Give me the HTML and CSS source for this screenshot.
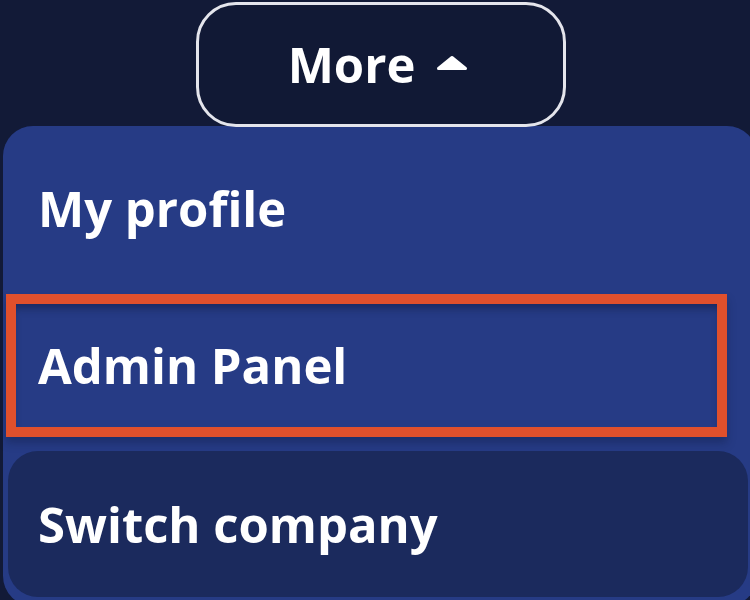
FILE: index.html
```html
<!DOCTYPE html>
<html lang="en">
<head>
<meta charset="utf-8">
<title>More menu</title>
<link rel="stylesheet" href="styles.css">
</head>
<body>
<div class="page">
  <button class="more-btn" type="button">
    <span class="more-label">More</span>
    <svg class="caret" width="32" height="16" viewBox="0 0 32 16" aria-hidden="true">
      <polygon points="16,2.5 29.5,13.5 2.5,13.5" fill="#ffffff" stroke="#ffffff" stroke-width="3" stroke-linejoin="round"/>
    </svg>
  </button>
  <div class="menu">
    <div class="item item-profile">My profile</div>
    <div class="item item-admin">Admin Panel</div>
    <div class="item item-switch">Switch company</div>
  </div>
</div>
</body>
</html>
```
FILE: styles.css
```css
html, body {
  margin: 0;
  padding: 0;
  background: #121a37;
  width: 750px;
  height: 600px;
  overflow: hidden;
}

.page {
  display: flex;
  flex-direction: column;
  align-items: flex-start;
  padding-top: 2px;
  font-family: "Open Sans", "Noto Sans", sans-serif;
  color: #ffffff;
}

.more-btn {
  margin-left: 196px;
  width: 370px;
  height: 125px;
  box-sizing: border-box;
  border: 3px solid #e4e5ec;
  border-radius: 40px;
  background: #111935;
  color: #ffffff;
  display: flex;
  align-items: center;
  justify-content: center;
  gap: 21px;
  font-family: inherit;
  font-size: 49px;
  font-weight: 700;
  padding: 0 6px 0 0;
  position: relative;
  z-index: 2;
}

.more-label {
  line-height: 1;
}

.caret {
  display: block;
  margin-top: -3px;
}

.menu {
  margin-left: 3px;
  margin-top: -1px;
  width: 754px;
  height: 480px;
  box-sizing: border-box;
  background: #263b85;
  border-radius: 30px;
  display: flex;
  flex-direction: column;
  align-items: flex-start;
}

.item {
  display: flex;
  align-items: center;
  box-sizing: border-box;
  font-size: 49px;
  font-weight: 700;
  line-height: 1;
  white-space: nowrap;
}

.item-profile {
  height: 168px;
  padding-left: 35px;
  padding-bottom: 4px;
}

.item-admin {
  margin-left: 3px;
  width: 721px;
  height: 143px;
  border: 10px solid #e0502c;
  padding-left: 22px;
  box-shadow: inset 0 8px 8px -4px rgba(15, 25, 60, 0.55), 0 6px 8px rgba(15, 25, 60, 0.35);
}

.item-switch {
  margin-top: 14px;
  margin-left: 5px;
  width: 740px;
  height: 146px;
  padding-left: 30px;
  background: #1b2a5d;
  border-radius: 30px;
}
```
